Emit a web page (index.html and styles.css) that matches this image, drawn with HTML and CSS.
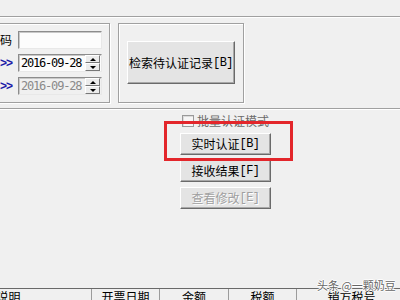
FILE: index.html
```html
<!DOCTYPE html>
<html lang="zh-CN">
<head>
<meta charset="utf-8">
<title>认证</title>
<link rel="stylesheet" href="styles.css">
</head>
<body>
<div class="window">
  <div class="topbar"></div>
  <div class="groups">
    <div class="group g1">
      <div class="row">
        <span class="lbl">码</span>
        <span class="edit"></span>
      </div>
      <div class="row">
        <span class="lbl arrow">&gt;&gt;</span>
        <span class="date">
          <span class="dtext">2016-09-28</span>
          <span class="spin"><span class="sb up"></span><span class="sb down"></span></span>
        </span>
      </div>
      <div class="row">
        <span class="lbl arrow">&gt;&gt;</span>
        <span class="date off">
          <span class="dtext">2016-09-28</span>
          <span class="spin"><span class="sb up"></span><span class="sb down"></span></span>
        </span>
      </div>
    </div>
    <div class="group g2">
      <button class="btn big">检索待认证记录<span class="key">[B]</span></button>
    </div>
  </div>
  <div class="sep"></div>
  <div class="actions">
    <label class="check"><span class="box"></span>批量认证模式</label>
    <button class="btn">实时认证<span class="key">[B]</span></button>
    <button class="btn">接收结果<span class="key">[F]</span></button>
    <button class="btn" disabled>查看修改<span class="key">[E]</span></button>
  </div>
  <div class="listhead">
    <span class="col">说明</span>
    <span class="col">开票日期</span>
    <span class="col">金额</span>
    <span class="col">税额</span>
    <span class="col">销方税号</span>
  </div>
  <div class="highlight"></div>
  <div class="watermark">头条 @一颗奶豆</div>
</div>
</body>
</html>
```
FILE: styles.css
```css
* { box-sizing: border-box; margin: 0; padding: 0; }
html, body { width: 400px; height: 300px; overflow: hidden; background: #f0f0f0; }
body { font: 12px/14px "Noto Sans CJK SC", "Liberation Sans", sans-serif; color: #000; }

.window { position: relative; width: 400px; height: 300px; display: flex; flex-direction: column; overflow: hidden; }

.topbar { height: 17px; flex: none; border-bottom: 1px solid #a0a0a0; box-shadow: 0 1px 0 #fff; }

.groups { display: flex; padding-top: 6px; flex: none; }
.group { height: 80px; border: 1px solid #a0a0a0; box-shadow: inset 1px 1px 0 #fff, 1px 1px 0 #fff; }
.g1 { margin-left: -11px; width: 121px; padding-top: 7px; display: flex; flex-direction: column; gap: 5px; }
.g2 { margin-left: 8px; width: 126px; padding: 17px 0 0 8px; }

.row { display: flex; height: 18px; align-items: center; }
.lbl { width: 28px; padding-right: 6px; text-align: right; flex: none; }
.arrow { color: #1c1ca8; font: bold 12px/14px "Liberation Sans", sans-serif; letter-spacing: -1px; padding-right: 6px; }

.edit, .date { width: 84px; height: 18px; border: 1px solid; border-color: #8c8c8c #e8e8e8 #e8e8e8 #8c8c8c; box-shadow: inset 1px 1px 0 #c8c8c8; background: #fcfcfc; }
.date { display: flex; align-items: center; padding: 1px; }
.date.off { background: #f0f0f0; color: #8a8a8a; }
.dtext { flex: 1; font: 12px/14px "DejaVu Sans Mono", monospace; letter-spacing: -1.2px; padding-left: 1px; }
.spin { width: 15px; height: 16px; display: flex; flex-direction: column; }
.sb { height: 8px; background: #ececec; border: 1px solid; border-color: #fff #777 #777 #fff; position: relative; }
.sb::after { content: ""; position: absolute; left: 4px; top: 2px; border-left: 3px solid transparent; border-right: 3px solid transparent; }
.up::after { border-bottom: 3px solid #000; }
.down::after { border-top: 3px solid #000; }

.btn { font: 12px/14px "Noto Sans CJK SC", sans-serif; color: #000; background: #e4e4e4; height: 22px; border: 1px solid; border-color: #fff #6a6a6a #6a6a6a #fff; box-shadow: inset -1px -1px 0 #a8a8a8; display: flex; align-items: center; justify-content: center; }
.btn .key { font: 12px/14px "Liberation Mono", monospace; letter-spacing: -0.6px; }
.btn:disabled { color: #a0a0a0; text-shadow: 1px 1px 0 #fff; }
.big { width: 108px; height: 43px; }

.sep { height: 1px; flex: none; background: #a0a0a0; margin-top: 5px; box-shadow: 0 1px 0 #fff; }

.actions { margin-left: 180px; width: 91px; padding-top: 5px; display: flex; flex-direction: column; gap: 5px; flex: none; }
.check { display: flex; align-items: center; gap: 3px; padding-left: 2px; height: 14px; color: #6a6a6a; }
.box { width: 12px; height: 12px; border: 1px solid #9a9a9a; background: #f6f6f6; box-shadow: inset 1px 1px 0 #dcdcdc; }

.listhead { margin-top: auto; flex: none; height: 12px; border-top: 1px solid #696969; margin-left: -74px; display: grid; grid-template-columns: 166px 68px 69px 68px 110px; }
.col { border-right: 1px solid #9c9c9c; text-align: center; padding-top: 1px; white-space: nowrap; }

.highlight { position: absolute; left: 164px; top: 121px; width: 129px; height: 40px; border: 3px solid #e3262b; }

.watermark { position: absolute; left: 317px; top: 280px; font-size: 11px; line-height: 11px; color: #666; text-shadow: 0 0 2px #fff, 1px 0 0 #fff, -1px 0 0 #fff, 0 1px 0 #fff, 0 -1px 0 #fff; white-space: nowrap; }
```
